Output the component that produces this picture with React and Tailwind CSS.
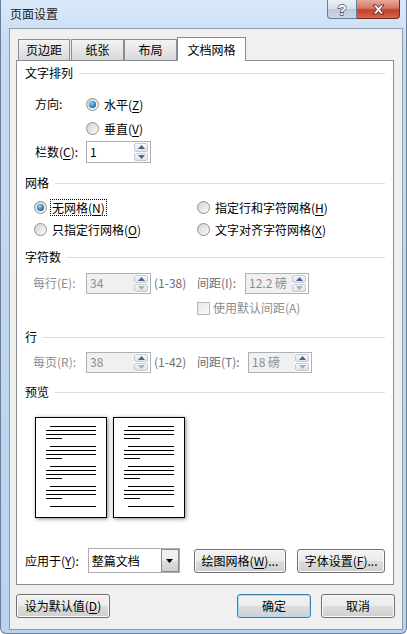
import React from "react";

const FONT = "font-['Noto_Sans_CJK_SC','Noto_Sans',sans-serif]";

function Arrow({ down, color }) {
  return (
    <svg width="7" height="4" viewBox="0 0 7 4">
      <path d={down ? "M0 0H7L3.5 4Z" : "M0 4H7L3.5 0Z"} fill={color} />
    </svg>
  );
}

function Radio({ checked }) {
  return (
    <span className="flex h-[13px] w-[13px] shrink-0 items-center justify-center rounded-full border border-[#8e8f8f] bg-[linear-gradient(135deg,#d2d2d2,#fbfbfb)]">
      {checked && (
        <span className="h-[7px] w-[7px] rounded-full bg-[radial-gradient(circle_at_40%_35%,#9ad8f8,#2a7fbf_55%,#0f4c80)]" />
      )}
    </span>
  );
}

function Option({ checked, focus, children }) {
  return (
    <div className="flex items-center gap-[3px]">
      <Radio checked={checked} />
      <span
        className={
          focus
            ? "border border-dotted border-black px-[1px] leading-[15px]"
            : "border border-transparent px-[1px] leading-[15px]"
        }
      >
        {children}
      </span>
    </div>
  );
}

function Key({ k }) {
  return <span className="underline underline-offset-[2px]">{k}</span>;
}

function Spin({ value, disabled, className }) {
  return (
    <div
      className={`flex border ${
        disabled ? "border-[#adb2b5] text-[#8d8d8d]" : "border-[#abadb3] text-black"
      } ${className}`}
    >
      <div className={`flex flex-1 items-center pl-[3px] ${disabled ? "bg-[#f0f0f0]" : "bg-white"}`}>
        {value}
      </div>
      <div className="flex w-[16px] flex-col gap-px bg-white py-px pr-[2px]">
        <div className="flex flex-1 items-center justify-center rounded-[2px] border border-[#c5cad3] bg-[linear-gradient(#f7f9fb,#dde3ea)]">
          <Arrow color="#4b6189" />
        </div>
        <div className="flex flex-1 items-center justify-center rounded-[2px] border border-[#c5cad3] bg-[linear-gradient(#f7f9fb,#dde3ea)]">
          <Arrow down color={disabled ? "#a9b0bb" : "#4b6189"} />
        </div>
      </div>
    </div>
  );
}

function Header({ children }) {
  return (
    <div className="flex h-[24px] items-center">
      <span>{children}</span>
      <div className="ml-[6px] h-px flex-1 bg-[#d5dfe5]" />
    </div>
  );
}

const BTN =
  "flex items-center justify-center rounded-[3px] border border-[#707070] bg-[linear-gradient(#f2f2f2_0%,#ebebeb_50%,#dddddd_51%,#cfcfcf_100%)] shadow-[inset_0_0_0_1px_#fbfbfb]";

function Page() {
  return (
    <div className="h-[101px] w-[72px] border border-black bg-white pl-[10px] pt-[8px] shadow-[1px_1px_4px_rgba(0,0,0,0.45)]">
      {[0, 1, 2, 3].map((g) => (
        <div key={g} className="flex h-[20px] flex-col">
          <div className="mb-[3px] ml-[4px] h-px w-[46px] bg-black" />
          <div className="mb-[3px] h-px w-[50px] bg-black" />
          <div className="mb-[3px] h-px w-[50px] bg-black" />
          <div className="h-px w-[16px] bg-black" />
        </div>
      ))}
      <div className="ml-[4px] h-px w-[46px] bg-black" />
    </div>
  );
}

function Tab({ active, className, children }) {
  return (
    <div
      className={
        active
          ? `relative z-10 -mb-px flex h-[24px] items-center justify-center border border-b-0 border-[#898c95] bg-white ${className}`
          : `flex h-[21px] items-center justify-center border border-b-0 border-[#898c95] bg-[linear-gradient(#f3f3f3,#d9d9d9)] ${className}`
      }
    >
      {children}
    </div>
  );
}

export default function App() {
  return (
    <div
      className={`${FONT} flex h-[634px] w-[407px] flex-col overflow-hidden rounded-b-[6px] border-x border-b border-[#6a7f9c] bg-[linear-gradient(180deg,#d9e9f9_0%,#c5dbf2_8%,#bad2ec_100%)] text-[12px] leading-[16px] text-black`}
    >
      {/* title bar */}
      <div className="flex h-[28px] shrink-0 items-start justify-between">
        <span className="pl-[9px] pt-[6px] text-[#1b1b1b]">页面设置</span>
        <div className="mr-[6px] flex">
          <div className="flex h-[19px] w-[30px] items-center justify-center rounded-bl-[4px] border border-t-0 border-[#6c7f98] bg-[linear-gradient(#eaf1f8_0%,#d4e0ec_50%,#bccbdc_51%,#c9d8e8_100%)]">
            <svg width="12" height="15" viewBox="0 0 12 15">
              <text
                x="6"
                y="13"
                textAnchor="middle"
                fontSize="15"
                fontWeight="bold"
                fontFamily="Liberation Sans, sans-serif"
                fill="#ffffff"
                stroke="#3d4757"
                strokeWidth="1.3"
                paintOrder="stroke"
              >
                ?
              </text>
            </svg>
          </div>
          <div className="flex h-[19px] w-[43px] items-center justify-center rounded-br-[4px] border border-l-0 border-t-0 border-[#6e2b22] bg-[linear-gradient(#e9a99b_0%,#d67966_45%,#c2412b_55%,#d5654c_100%)]">
            <svg width="13" height="11" viewBox="0 0 13 11">
              <path
                d="M1 1H4.5L6.5 3.6L8.5 1H12L8.3 5.5L12 10H8.5L6.5 7.4L4.5 10H1L4.7 5.5Z"
                fill="#ffffff"
                stroke="#4a2520"
                strokeWidth="0.9"
                strokeLinejoin="round"
              />
            </svg>
          </div>
        </div>
      </div>

      {/* client area */}
      <div className="ml-[8px] flex h-[602px] w-[394px] flex-col border border-[#8f9cad] bg-[#f0f0f0]">
        <div className="flex h-[31px] items-end pl-[8px]">
          <Tab className="mr-px w-[52px]">页边距</Tab>
          <Tab className="w-[53px]">纸张</Tab>
          <Tab className="w-[53px]">布局</Tab>
          <Tab active className="w-[69px]">
            文档网格
          </Tab>
        </div>

        <div className="ml-[6px] flex h-[525px] w-[378px] flex-col border border-[#898c95] bg-white px-[8px]">
          <Header>文字排列</Header>
          <div className="mt-[7px] flex h-[24px] items-center pl-[10px]">
            <span className="w-[51px]">方向:</span>
            <Option checked>
              水平(<Key k="Z" />)
            </Option>
          </div>
          <div className="flex h-[24px] items-center pl-[61px]">
            <Option>
              垂直(<Key k="V" />)
            </Option>
          </div>
          <div className="flex h-[24px] items-center pl-[10px]">
            <span className="w-[51px]">
              栏数(<Key k="C" />):
            </span>
            <Spin value="1" className="h-[22px] w-[65px]" />
          </div>

          <div className="mt-[7px]">
            <Header>网格</Header>
          </div>
          <div className="mt-px flex h-[22px] items-center pl-[9px]">
            <div className="w-[163px]">
              <Option checked focus>
                无网格(<Key k="N" />)
              </Option>
            </div>
            <Option>
              指定行和字符网格(<Key k="H" />)
            </Option>
          </div>
          <div className="flex h-[22px] items-center pl-[9px]">
            <div className="w-[163px]">
              <Option>
                只指定行网格(<Key k="O" />)
              </Option>
            </div>
            <Option>
              文字对齐字符网格(<Key k="X" />)
            </Option>
          </div>

          <div className="mt-[5px]">
            <Header>字符数</Header>
          </div>
          <div className="mt-[2px] flex h-[24px] items-center pl-[8px]">
            <span className="w-[53px] text-[#8d8d8d]">每行(E):</span>
            <Spin disabled value="34" className="h-[21px] w-[65px]" />
            <span className="ml-[3px] w-[43px] text-[#6d6d6d]">(1-38)</span>
            <span className="w-[48px] text-[#6d6d6d]">间距(I):</span>
            <Spin disabled value="12.2 磅" className="h-[21px] w-[64px]" />
          </div>
          <div className="mt-[2px] flex h-[22px] items-center gap-[3px] pl-[172px]">
            <span className="h-[13px] w-[13px] border border-[#b8b8b8] bg-[linear-gradient(135deg,#e6e6e6,#fbfbfb)]" />
            <span className="text-[#8d8d8d]">使用默认间距(A)</span>
          </div>

          <div className="mt-[6px]">
            <Header>行</Header>
          </div>
          <div className="mt-px flex h-[24px] items-center pl-[8px]">
            <span className="w-[53px] text-[#8d8d8d]">每页(R):</span>
            <Spin disabled value="38" className="h-[21px] w-[65px]" />
            <span className="ml-[3px] w-[43px] text-[#6d6d6d]">(1-42)</span>
            <span className="w-[51px] text-[#6d6d6d]">间距(T):</span>
            <Spin disabled value="18 磅" className="h-[21px] w-[64px]" />
          </div>

          <div className="mt-[6px]">
            <Header>预览</Header>
          </div>
          <div className="mt-[13px] flex gap-[6px] pl-[10px]">
            <Page />
            <Page />
          </div>

          <div className="mt-[30px] flex h-[25px] items-center">
            <span className="w-[63px]">
              应用于(<Key k="Y" />):
            </span>
            <div className="flex h-[25px] w-[92px] border border-[#abadb3] bg-white">
              <span className="flex flex-1 items-center pl-[3px]">整篇文档</span>
              <div className="flex w-[18px] items-center justify-center border border-[#8a8a8a] bg-[linear-gradient(#f2f2f2_0%,#ebebeb_50%,#dddddd_51%,#cfcfcf_100%)]">
                <Arrow down color="#000000" />
              </div>
            </div>
            <div className={`${BTN} ml-[14px] h-[24px] w-[93px]`}>
              绘图网格(<Key k="W" />)...
            </div>
            <div className={`${BTN} ml-[11px] h-[24px] w-[88px]`}>
              字体设置(<Key k="F" />)...
            </div>
          </div>
        </div>

        <div className="mt-[9px] flex items-center pl-[6px]">
          <div className={`${BTN} h-[24px] w-[94px]`}>
            设为默认值(<Key k="D" />)
          </div>
          <div className="flex-1" />
          <div className="flex h-[24px] w-[74px] items-center justify-center rounded-[3px] border border-[#3c7fb1] bg-[linear-gradient(#f2f2f2_0%,#ebebeb_50%,#dddddd_51%,#cfcfcf_100%)] shadow-[inset_0_0_0_1px_#a8dbf7]">
            确定
          </div>
          <div className={`${BTN} ml-[10px] mr-[7px] h-[24px] w-[74px]`}>取消</div>
        </div>
      </div>
    </div>
  );
}
